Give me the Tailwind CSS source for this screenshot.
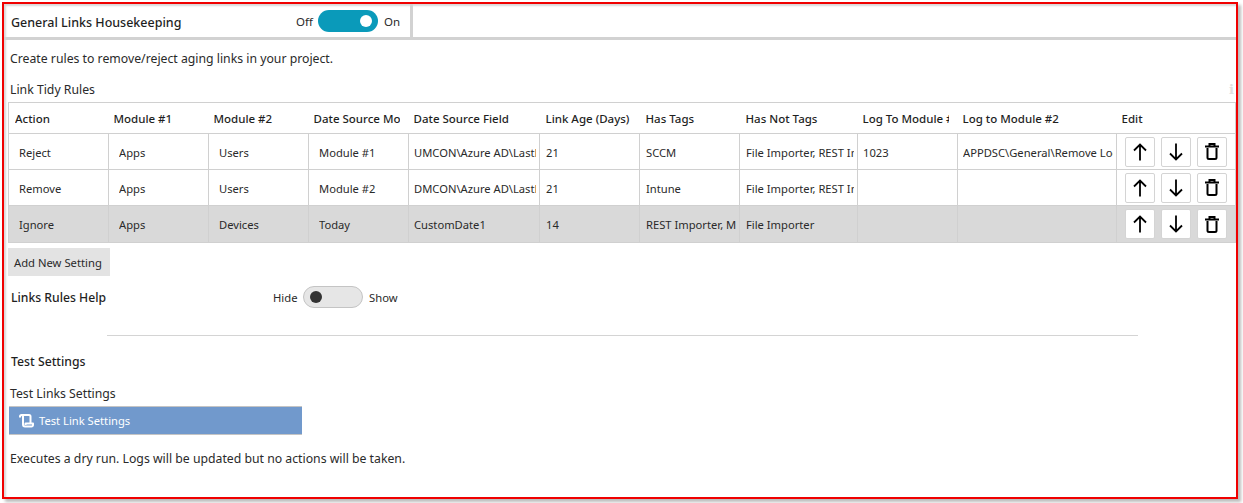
<!DOCTYPE html>
<html lang="en">
<head>
    <meta charset="UTF-8">
    <title>General Links Housekeeping</title>
    <script src="https://cdn.jsdelivr.net/npm/@tailwindcss/browser@4"></script>
</head>
<body class="w-[1243px] h-[503px] overflow-hidden bg-white font-['Noto_Sans',sans-serif] text-[12.25px] text-[#2a2a2a]">
    <div class="w-[1236px] h-[497px] mt-[2px] ml-[2px] border-2 border-[#f00000] shadow-[3px_3px_3px_#bbbbbb,inset_2px_2px_2px_#d8d8d8] overflow-hidden">
        <!-- top header strip -->
        <div class="flex h-[36px] border-b-[3px] border-[#d2d2d2]">
            <div class="flex items-center w-[409px] border-r-[3px] border-[#d2d2d2] pl-[7px] pt-[1px] text-[11.5px]">
                <span class="w-[285px] pt-[4px] text-[12.5px] font-medium text-[#1f1f1f]">General Links Housekeeping</span>
                <span class="w-[22px] pt-[2px]">Off</span>
                <div class="flex items-center justify-end w-[60px] h-[22px] pr-[6px] rounded-full bg-[#0a9aba]">
                    <div class="w-[12px] h-[12px] rounded-full bg-white"></div>
                </div>
                <span class="ml-[6px] pt-[2px]">On</span>
            </div>
        </div>

        <div class="pl-[4px]">
            <p class="ml-[2px] mt-[9px] h-[20px] leading-[20px]">Create rules to remove/reject aging links in your project.</p>
            <div class="flex justify-between ml-[2px] mt-[11px] h-[20px] leading-[20px]">
                <span>Link Tidy Rules</span>
                <span class="pr-[2px] font-['DejaVu_Serif',serif] font-bold text-[13px] text-[#e0e0e0]">i</span>
            </div>

            <table class="table-fixed border-collapse w-[1227px] mt-[2px] border-x border-[#d0d0d0] text-[11.2px]">
                <colgroup>
                    <col class="w-[100px]"><col class="w-[100px]"><col class="w-[100px]"><col class="w-[100px]"><col class="w-[131px]"><col class="w-[100px]"><col class="w-[100px]"><col class="w-[118px]"><col class="w-[100px]"><col class="w-[159px]"><col class="w-[119px]">
                </colgroup>
                <thead>
                    <tr class="h-[31px] border-t border-b border-[#d0d0d0] text-left text-[11.5px] text-[#1f1f1f]">
                        <th class="font-medium pl-[6px] pr-[9px] pt-[2px]"><div class="overflow-hidden whitespace-nowrap">Action</div></th>
                        <th class="font-medium pl-[5px] pr-[9px] pt-[2px]"><div class="overflow-hidden whitespace-nowrap">Module #1</div></th>
                        <th class="font-medium pl-[5px] pr-[9px] pt-[2px]"><div class="overflow-hidden whitespace-nowrap">Module #2</div></th>
                        <th class="font-medium pl-[5px] pr-[9px] pt-[2px]"><div class="overflow-hidden whitespace-nowrap">Date Source Module</div></th>
                        <th class="font-medium pl-[5px] pr-[9px] pt-[2px]"><div class="overflow-hidden whitespace-nowrap">Date Source Field</div></th>
                        <th class="font-medium pl-[6px] pr-[9px] pt-[2px]"><div class="overflow-hidden whitespace-nowrap">Link Age (Days)</div></th>
                        <th class="font-medium pl-[6px] pr-[9px] pt-[2px]"><div class="overflow-hidden whitespace-nowrap">Has Tags</div></th>
                        <th class="font-medium pl-[6px] pr-[9px] pt-[2px]"><div class="overflow-hidden whitespace-nowrap">Has Not Tags</div></th>
                        <th class="font-medium pl-[5px] pr-[9px] pt-[2px]"><div class="overflow-hidden whitespace-nowrap">Log To Module #1</div></th>
                        <th class="font-medium pl-[5px] pr-[9px] pt-[2px]"><div class="overflow-hidden whitespace-nowrap">Log to Module #2</div></th>
                        <th class="font-medium pl-[5px] pr-[9px] pt-[2px]"><div class="overflow-hidden whitespace-nowrap">Edit</div></th>
                    </tr>
                </thead>
                <tbody id="rows"></tbody>
            </table>

            <button class="block w-[102px] h-[28px] mt-[5px] pt-[3px] pl-[6px] bg-[#e3e3e3] text-left text-[11.25px]">Add New Setting</button>

            <div class="flex items-center h-[22px] mt-[10px] pl-[3px] text-[11.25px]">
                <span class="w-[262px] pt-[2px] font-medium text-[12.2px] text-[#1f1f1f]">Links Rules Help</span>
                <span class="w-[30px] pt-[2px]">Hide</span>
                <div class="flex items-center w-[60px] h-[22px] pl-[6px] rounded-full bg-[#e6e6e6] border border-[#c4c4c4]">
                    <div class="w-[12px] h-[12px] rounded-full bg-[#333333]"></div>
                </div>
                <span class="ml-[6px] pt-[2px]">Show</span>
            </div>

            <div class="w-[1031px] ml-[99px] mt-[27px] border-t border-[#d4d4d4]"></div>

            <p class="ml-[3px] mt-[16px] h-[20px] leading-[20px] font-medium text-[#1f1f1f]">Test Settings</p>
            <p class="ml-[2px] mt-[12px] h-[20px] leading-[20px]">Test Links Settings</p>
            <button class="flex items-center w-[293px] h-[29px] ml-[1px] mt-[2px] pl-[10px] pt-[1px] bg-[#7199cc] text-white text-[11.2px] border-t border-b border-[#c4c4c4]">
                <svg class="w-[15px] h-[14px] mr-[5px]" viewBox="0 0 15 14" fill="none" stroke="white" stroke-width="2" stroke-linejoin="round">
                    <path d="M1 3.500V2.500A1.500 1.500 0 0 1 2.500 1H10A1.500 1.500 0 0 1 11.500 2.500V9M2.500 1A1.500 1.500 0 0 1 4 2.500V10.500A2 2 0 0 0 6 12.500H12.500A1.500 1.500 0 0 0 14 11V9.500H6.500V11"/>
                </svg>
                Test Link Settings
            </button>
            <p class="ml-[2px] mt-[14px] h-[20px] leading-[20px]">Executes a dry run. Logs will be updated but no actions will be taken.</p>
        </div>
    </div>
    <script>
        const rowData = [
            { height: 'h-[36px]', cells: ['Reject', 'Apps', 'Users', 'Module #1', 'UMCON\\Azure AD\\LastLogon', '21', 'SCCM', 'File Importer, REST Importer', '1023', 'APPDSC\\General\\Remove Log'] },
            { height: 'h-[36px]', cells: ['Remove', 'Apps', 'Users', 'Module #2', 'DMCON\\Azure AD\\LastLogon', '21', 'Intune', 'File Importer, REST Importer', '', ''] },
            { height: 'h-[37px]', cells: ['Ignore', 'Apps', 'Devices', 'Today', 'CustomDate1', '14', 'REST Importer, Manual', 'File Importer', '', ''], selected: true }
        ];

        // left padding of each body column
        const cellPadding = ['pl-[10px]', 'pl-[10px]', 'pl-[10px]', 'pl-[10px]', 'pl-[5px]', 'pl-[6px]', 'pl-[6px]', 'pl-[6px]', 'pl-[5px]', 'pl-[5px]'];

        const upIcon = '<svg class="w-[14px] h-[18px]" viewBox="0 0 14 18" fill="none" stroke="black" stroke-width="1.8"><path d="M7 17.500V1.500M1 7.500l6-6 6 6"/></svg>';
        const downIcon = '<svg class="w-[14px] h-[18px]" viewBox="0 0 14 18" fill="none" stroke="black" stroke-width="1.8"><path d="M7 .5V16.500M1 10.500l6 6 6-6"/></svg>';
        const binIcon = '<svg class="w-[14px] h-[17px]" viewBox="0 0 14 17" fill="none" stroke="black" stroke-width="2"><path d="M2.500 5v9.500A1.500 1.500 0 0 0 4 16h6a1.500 1.500 0 0 0 1.500-1.500V5M0 3.500h14M4.500 3V1h5v2"/></svg>';
        const button = icon => `<button class="flex items-center justify-center w-[30px] h-[30px] bg-white border border-[#d4d4d4] rounded-[2px]">${icon}</button>`;

        document.querySelector('#rows').innerHTML = rowData.map(row => `
            <tr class="${row.height} border-b border-[#d0d0d0] ${row.selected ? 'bg-[#d9d9d9]' : ''}">
                ${row.cells.map((text, i) => `<td class="border-r border-[#d0d0d0] ${cellPadding[i]} pr-[3px] pt-[3px]"><div class="overflow-hidden whitespace-nowrap">${text}</div></td>`).join('')}
                <td class="pl-[8px]"><div class="flex gap-[6px]">${button(upIcon)}${button(downIcon)}${button(binIcon)}</div></td>
            </tr>
        `).join('');
    </script>
</body>
</html>
